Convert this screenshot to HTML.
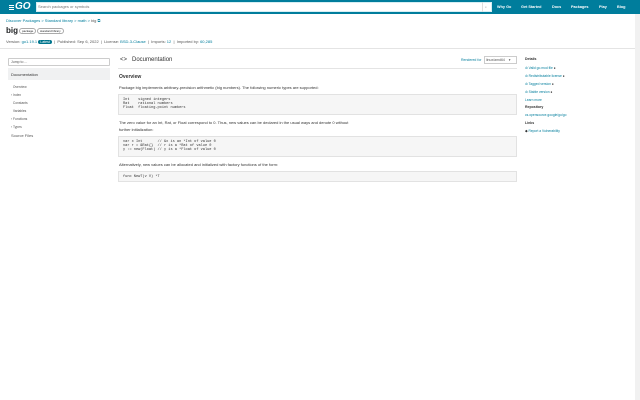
<!DOCTYPE html>
<html><head><meta charset="utf-8"><style>
*{margin:0;padding:0;box-sizing:border-box}
body{width:640px;height:400px;overflow:hidden;background:#fff;font-family:"Liberation Sans",sans-serif;color:#202224;position:relative}
.a{position:absolute;white-space:nowrap}
.hdr{left:0;top:0;width:640px;height:14px;background:#007d9c}
.s{font-size:4px}
.l{color:#007d9c}
.g{color:#555}
.code{background:#f6f6f6;border:1px solid #e2e2e2;font-family:"Liberation Mono",monospace;font-size:3.6px;line-height:4.2px;color:#333;padding:2px 4px;left:118px;width:399px;white-space:pre}
.nav{font-size:3.8px;color:#fff;font-weight:bold;top:5px}
</style></head><body>
<div class="a hdr"></div>
<div class="a" style="left:15px;top:2px;font:italic bold 10px 'Liberation Sans',sans-serif;color:#fff;line-height:10px">GO</div>
<div class="a" style="left:9px;top:5px;width:5px;height:1px;background:#fff;box-shadow:0 2px #fff,0 4px #fff"></div>
<div class="a" style="left:36px;top:2px;width:136px;height:10px;background:#fff"></div>
<div class="a" style="left:36px;top:2px;width:456px;height:10px;background:#fff;border:1px solid #d6eef3"></div>
<div class="a s" style="left:38px;top:4px;color:#777">Search packages or symbols</div>
<div class="a" style="left:482px;top:2px;width:10px;height:10px;border-left:1px solid #ddd"></div>
<div class="a" style="left:485px;top:5px;font-size:3.5px;color:#777">⌕</div>
<div class="a nav" style="left:497px">Why Go</div>
<div class="a nav" style="left:521px">Get Started</div>
<div class="a nav" style="left:552px">Docs</div>
<div class="a nav" style="left:571px">Packages</div>
<div class="a nav" style="left:599px">Play</div>
<div class="a nav" style="left:617px">Blog</div>
<div class="a" style="left:635px;top:14px;width:5px;height:386px;background:#f1f1f1"></div>
<div class="a s l" style="left:6px;top:18px">Discover Packages &gt; <span>Standard library</span> &gt; math &gt; <span class="g">big</span> ⧉</div>
<div class="a" style="left:6px;top:26px;font-size:8px;font-weight:bold">big</div>
<div class="a" style="left:19px;top:28px;font-size:3px;border:1px solid #aaa;border-radius:3px;padding:0 2px;line-height:4px">package</div>
<div class="a" style="left:37px;top:28px;font-size:3px;border:1px solid #aaa;border-radius:3px;padding:0 2px;line-height:4px">standard library</div>
<div class="a s g" style="left:6px;top:39px">Version: <span class="l">go1.19.1</span> <span style="background:#00758d;color:#fff;border-radius:2px;padding:0 2px;font-size:3.5px">Latest</span> &nbsp;| &nbsp;Published: Sep 6, 2022 &nbsp;| &nbsp;License: <span class="l">BSD-3-Clause</span> &nbsp;| &nbsp;Imports: <span class="l">12</span> &nbsp;| &nbsp;Imported by: <span class="l">60,285</span></div>
<div class="a" style="left:0;top:48px;width:635px;height:1px;background:#e4e4e4"></div>
<div class="a" style="left:8px;top:58px;width:102px;height:8px;border:1px solid #ccc;border-radius:1px"></div>
<div class="a s g" style="left:11px;top:60px;font-size:3.5px">Jump to ...</div>
<div class="a" style="left:8px;top:68px;width:102px;height:12px;background:#f0f1f2"></div>
<div class="a s" style="left:11px;top:72px;color:#333">Documentation</div>
<div class="a g" style="left:11px;top:83px;font-size:3.3px;line-height:8px">&nbsp;&nbsp;Overview<br>› Index<br>&nbsp;&nbsp;Constants<br>&nbsp;&nbsp;Variables<br>› Functions<br>› Types</div>
<div class="a s g" style="left:11px;top:133px">Source Files</div>
<div class="a" style="left:120px;top:57px;font-size:6px;color:#333">&lt;&gt; &nbsp;&nbsp;Documentation</div>
<div class="a s l" style="left:461px;top:58px;font-size:3.5px">Rendered for</div>
<div class="a" style="left:484px;top:56px;width:33px;height:8px;border:1px solid #ccc"></div>
<div class="a g" style="left:486px;top:58px;font-size:3.5px">linux/amd64 &nbsp;&nbsp;&nbsp;▾</div>
<div class="a" style="left:118px;top:68px;width:399px;height:1px;background:#e4e4e4"></div>
<div class="a" style="left:119px;top:74px;font-size:5px;font-weight:bold;color:#333">Overview</div>
<div class="a s" style="left:119px;top:85px;color:#333">Package big implements arbitrary-precision arithmetic (big numbers). The following numeric types are supported:</div>
<div class="a code" style="top:94px;height:21px;padding-top:3px">Int    signed integers
Rat    rational numbers
Float  floating-point numbers</div>
<div class="a s" style="left:119px;top:119px;color:#333;line-height:7px">The zero value for an Int, Rat, or Float correspond to 0. Thus, new values can be declared in the usual ways and denote 0 without<br>further initialization:</div>
<div class="a code" style="top:136px;height:21px;padding-top:3px">var x Int       // &amp;x is an *Int of value 0
var r = &amp;Rat{}  // r is a *Rat of value 0
y := new(Float) // y is a *Float of value 0</div>
<div class="a s" style="left:119px;top:162px;color:#333">Alternatively, new values can be allocated and initialized with factory functions of the form:</div>
<div class="a code" style="top:171px;height:11px;padding-top:3px">func NewT(v V) *T</div>
<div class="a" style="left:525px;top:57px;font-size:3.5px;font-weight:bold;color:#333">Details</div>
<div class="a l" style="left:525px;top:64px;font-size:3.3px;line-height:8px">⊘ Valid go.mod file <span style="color:#333">●</span><br>⊘ Redistributable license <span style="color:#333">●</span><br>⊘ Tagged version <span style="color:#333">●</span><br>⊘ Stable version <span style="color:#333">●</span><br>Learn more</div>
<div class="a" style="left:525px;top:105px;font-size:3.5px;font-weight:bold;color:#333">Repository</div>
<div class="a l" style="left:525px;top:113px;font-size:3.3px">cs.opensource.google/go/go</div>
<div class="a" style="left:525px;top:121px;font-size:3.5px;font-weight:bold;color:#333">Links</div>
<div class="a l" style="left:525px;top:129px;font-size:3.3px"><span style="color:#333">◆</span> Report a Vulnerability</div>
</body></html>
